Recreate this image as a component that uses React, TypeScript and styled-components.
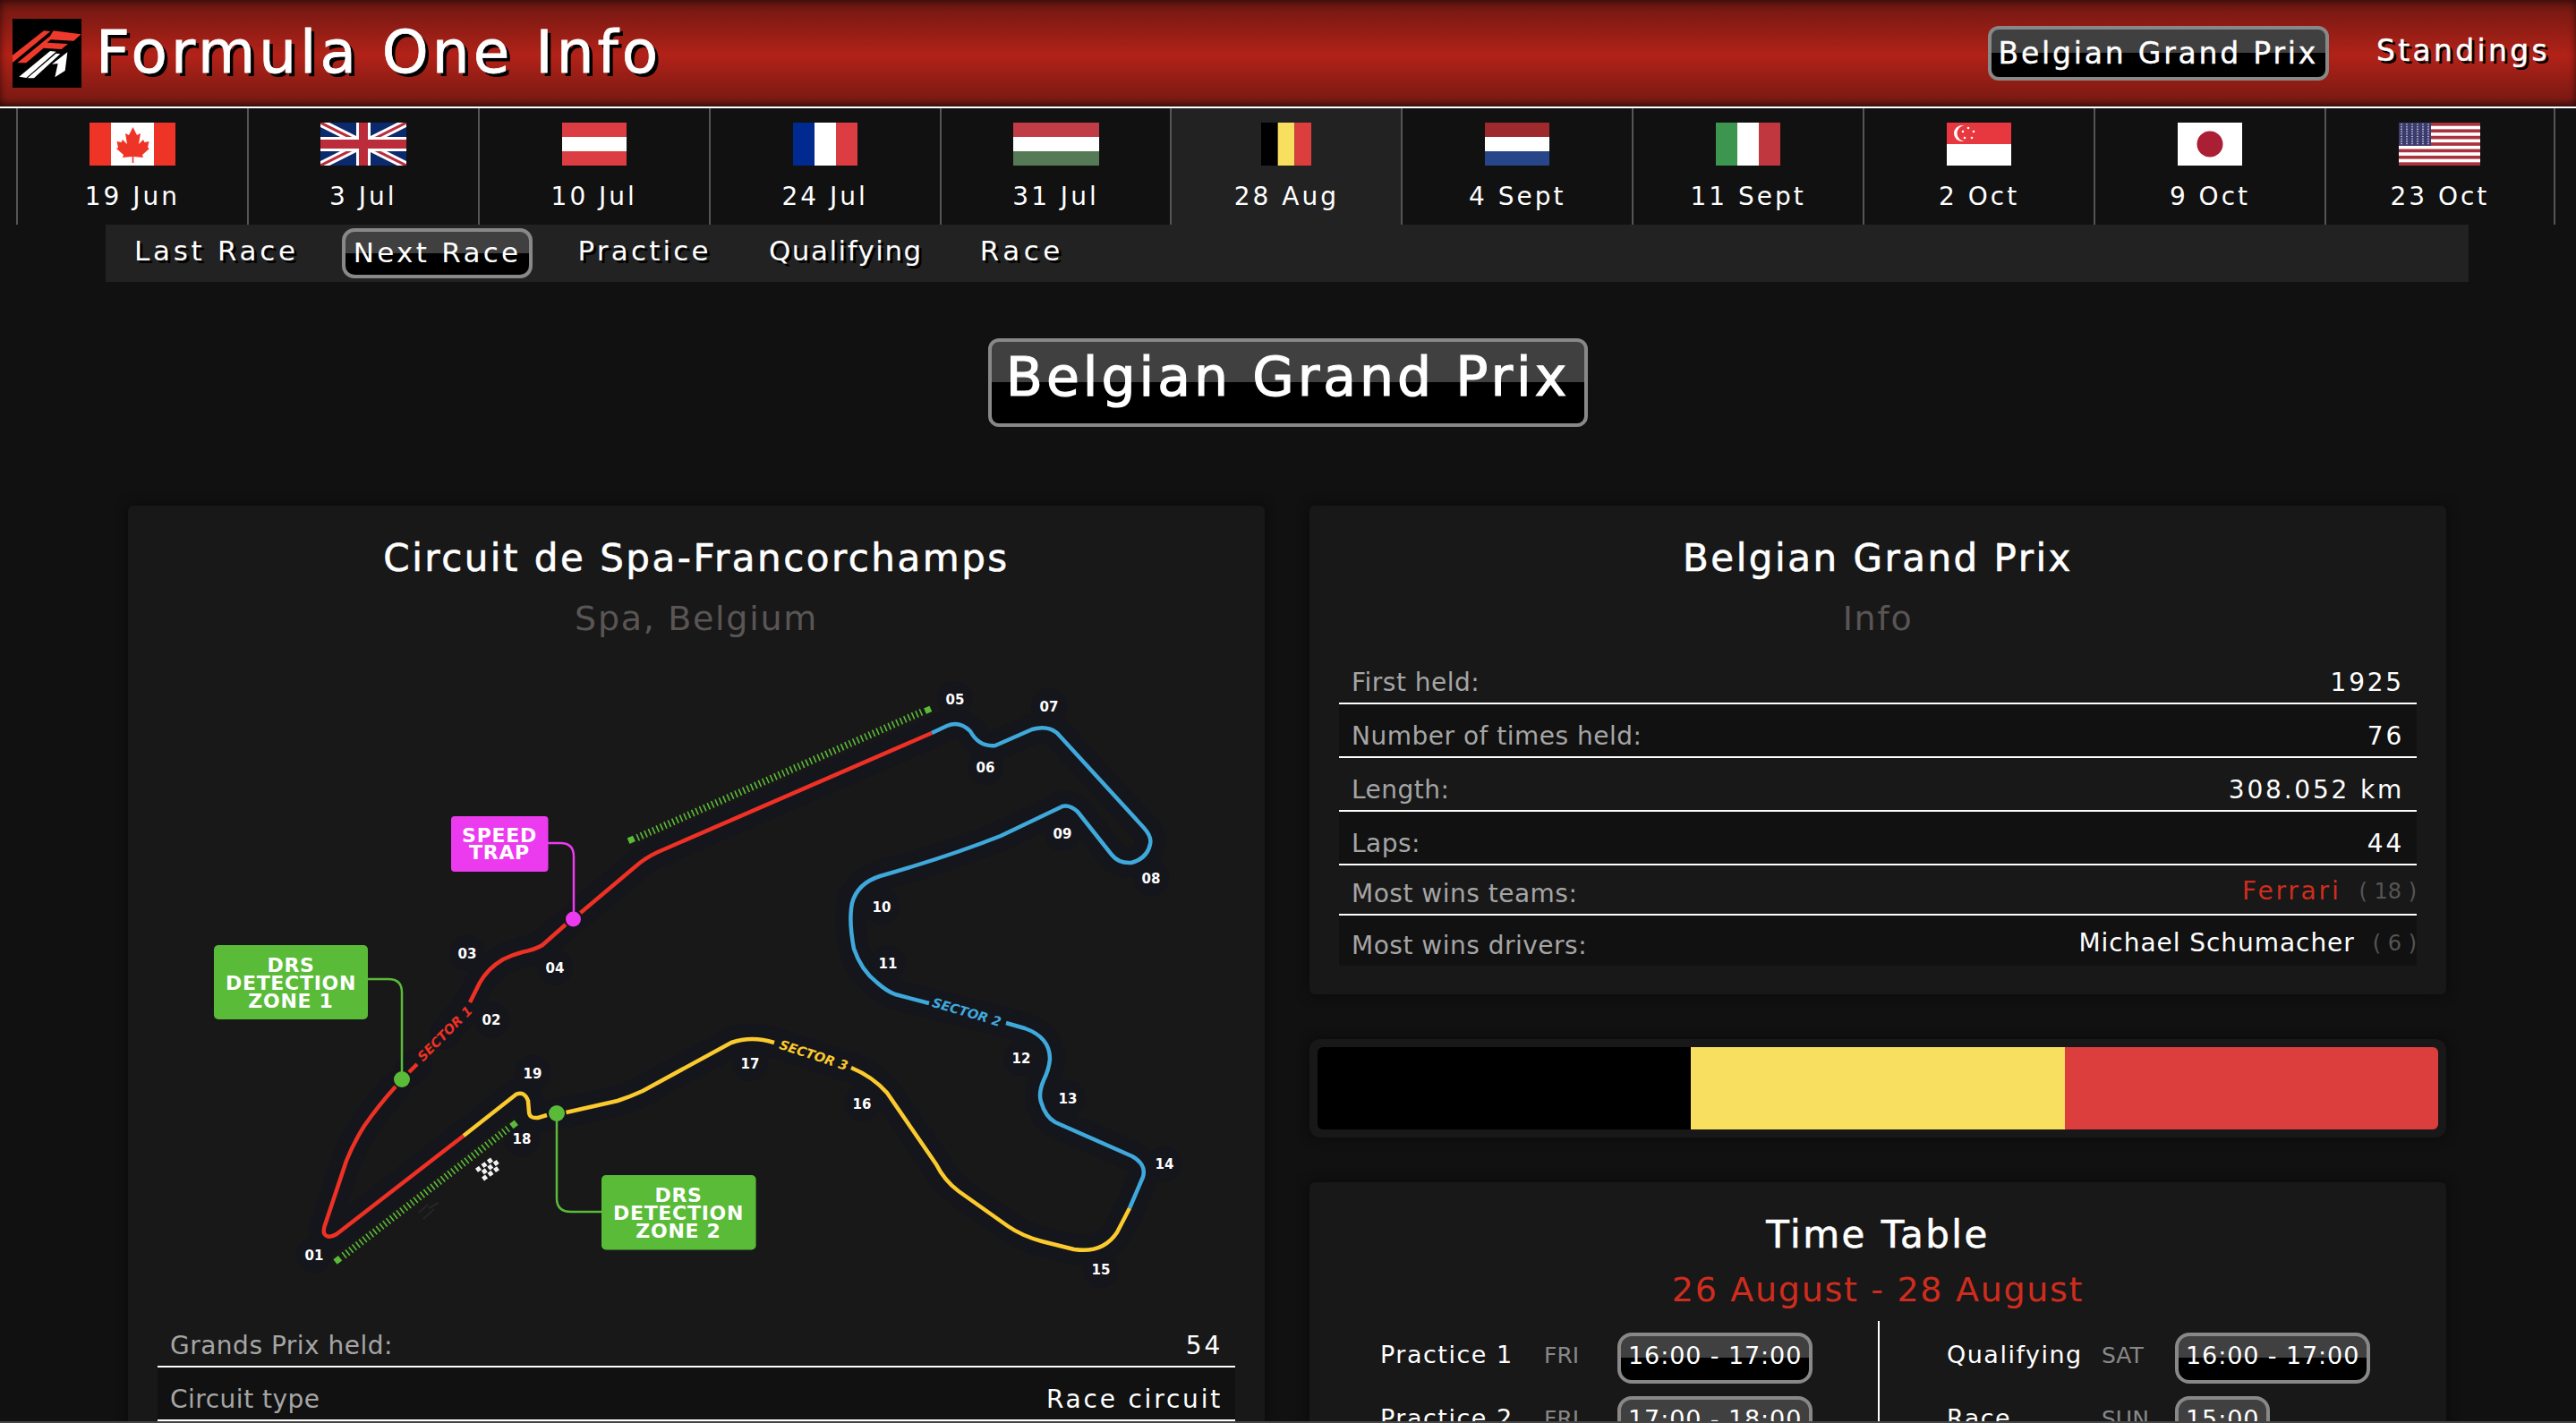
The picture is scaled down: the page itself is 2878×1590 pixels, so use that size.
import React from 'react';
import styled, { createGlobalStyle } from 'styled-components';

const GlobalStyle = createGlobalStyle`
  html, body {
    margin: 0;
    height: 100%;
    overflow: hidden;
    background: #111;
    color: #fff;
    font-family: "DejaVu Sans", "Liberation Sans", sans-serif;
  }
`;

const RED = '#d02c1e';

const Stripes = ({ w, colors, vertical }: { w: number; colors: string[]; vertical?: boolean }) => (
  <svg width={w} height={48} viewBox={`0 0 ${w} 48`}>
    {colors.map((c, i) => vertical
      ? <rect key={i} x={(w / colors.length) * i} y={0} width={w / colors.length} height={48} fill={c} />
      : <rect key={i} x={0} y={16 * i} width={w} height={16} fill={c} />)}
  </svg>
);

const CanadaFlag = () => (
  <svg width={96} height={48} viewBox="0 0 96 48">
    <rect width="96" height="48" fill="#fff" />
    <rect width="24" height="48" fill="#ee3427" />
    <rect x="72" width="24" height="48" fill="#ee3427" />
    <path fill="#ee3427" d="M48.5 5 L44 14 L40 12 L42 24 L37 19 L35.5 22 L30.5 21 L32 28 L30 29 L38 36 L37 39 L47.7 38 L47.7 45 L49.3 45 L49.3 38 L60 39 L59 36 L67 29 L65 28 L66.5 21 L61.5 22 L60 19 L55 24 L57 12 L53 14 Z" />
  </svg>
);

const UkFlag = () => (
  <svg width={96} height={48} viewBox="0 0 96 48">
    <rect width="96" height="48" fill="#0b2a6e" />
    <path d="M0 0 L96 48 M96 0 L0 48" stroke="#fff" strokeWidth="9" />
    <path d="M0 0 L96 48 M96 0 L0 48" stroke="#bb2d3b" strokeWidth="3" />
    <path d="M48 0 V48 M0 24 H96" stroke="#fff" strokeWidth="16" />
    <path d="M48 0 V48 M0 24 H96" stroke="#bb2d3b" strokeWidth="10" />
  </svg>
);

const SingaporeFlag = () => (
  <svg width={72} height={48} viewBox="0 0 72 48">
    <rect width="72" height="48" fill="#fff" />
    <rect width="72" height="24" fill="#e8383f" />
    <circle cx="17" cy="12" r="9" fill="#fff" />
    <circle cx="20.5" cy="12" r="9" fill="#e8383f" />
    {[[24, 6], [30, 10], [28, 17], [20, 17], [18, 10]].map(([x, y]) => (
      <circle key={x * y} cx={x} cy={y} r="1.3" fill="#fff" />
    ))}
  </svg>
);

const JapanFlag = () => (
  <svg width={72} height={48} viewBox="0 0 72 48">
    <rect width="72" height="48" fill="#fff" />
    <circle cx="36" cy="24" r="14.5" fill="#ab1f35" />
  </svg>
);

const UsaFlag = () => (
  <svg width={91} height={48} viewBox="0 0 91 48">
    <rect width="91" height="48" fill="#fff" />
    {Array.from({ length: 7 }).map((_, i) => (
      <rect key={i} y={(48 / 13) * i * 2} width="91" height={48 / 13} fill="#a8323e" />
    ))}
    <rect width="36" height="25.8" fill="#3c3b6e" />
    {Array.from({ length: 9 }).map((_, r) => Array.from({ length: 6 }).map((__, c) => (
      <circle key={`${r}-${c}`} cx={3 + c * 6} cy={2 + r * 2.7} r="0.8" fill="#dfe0ee" />
    )))}
  </svg>
);

const races = [
  { date: '19 Jun', flag: <CanadaFlag /> },
  { date: '3 Jul', flag: <UkFlag /> },
  { date: '10 Jul', flag: <Stripes w={72} colors={['#dc3d43', '#fff', '#dc3d43']} /> },
  { date: '24 Jul', flag: <Stripes w={72} vertical colors={['#002a8f', '#fff', '#dc3d43']} /> },
  { date: '31 Jul', flag: <Stripes w={96} colors={['#c03c47', '#fff', '#557a55']} /> },
  { date: '28 Aug', flag: <Stripes w={56} vertical colors={['#000', '#f9df5f', '#dc3d3d']} />, active: true },
  { date: '4 Sept', flag: <Stripes w={72} colors={['#9e2a2e', '#fff', '#27468a']} /> },
  { date: '11 Sept', flag: <Stripes w={72} vertical colors={['#3d9650', '#fff', '#c0373f']} /> },
  { date: '2 Oct', flag: <SingaporeFlag /> },
  { date: '9 Oct', flag: <JapanFlag /> },
  { date: '23 Oct', flag: <UsaFlag /> },
];

const turns: [string, number, number][] = [
  ['01', 351, 1403], ['02', 549, 1140], ['03', 522, 1066], ['04', 620, 1082], ['05', 1067, 782],
  ['06', 1101, 858], ['07', 1172, 790], ['08', 1286, 982], ['09', 1187, 932], ['10', 985, 1014],
  ['11', 992, 1077], ['12', 1141, 1183], ['13', 1193, 1228.5], ['14', 1301, 1301.5], ['15', 1230, 1419.5],
  ['16', 963, 1234], ['17', 838, 1189], ['18', 583, 1273.5], ['19', 595, 1200],
];

const redTrack = [
  'M518 1270 L376 1380 Q366 1386 362 1379 Q361 1374 364 1367 L387 1298 Q395 1278 407 1259 Q423 1236 442 1215',
  'M457 1199 L466 1190',
  'M525 1121 L536 1099 Q545 1083 562 1073 Q572 1068 583 1065 Q598 1062 606 1057 L632 1034',
  'M648.5 1021 L709 970 Q720 960 735 953 L1041 820',
];
const blueTrack = [
  'M1041 820 L1058 812 Q1072 806 1084 818 Q1094 836 1112 834 L1153 816 Q1170 811 1181 820 L1278 926 Q1287 936 1285 944 Q1282 960 1264 965 Q1250 966 1242 956 L1204 908 Q1195 900 1187 902 L1118 935 Q1060 958 983 980 Q958 988 952 1010 Q948 1030 954 1061 Q962 1085 980 1099 Q990 1108 1000 1112 L1038 1122',
  'M1124 1144 L1145 1150 Q1173 1160 1173 1184 Q1172 1196 1166 1208 Q1160 1222 1163 1232 Q1168 1249 1179 1255 L1265 1293 Q1281 1302 1277 1316 L1262 1351',
];
const yellowTrack = [
  'M1262 1351 L1248 1378 Q1232 1402 1200 1397 L1164 1388 Q1142 1382 1126 1371 L1071 1332 Q1055 1320 1046 1302 L991 1222 Q975 1204 951 1194',
  'M865 1166 Q840 1158 817 1166 L718 1220 Q705 1226 690 1231 L632.5 1244',
  'M611 1247 L601 1250 Q591 1251 591 1243 L590 1231 Q586 1220 577 1223.5 L518 1270',
];

const Logo = () => (
  <svg width={77} height={77} viewBox="0 0 231 231">
    <rect width="231" height="231" fill="#000" />
    <g fill="#ee3a2c">
      <polygon points="0,122 105,40 127,42 0,147" />
      <polygon points="16,148 126,58 137,40 230,52 205,74 128,70 116,80 186,84 164,102 104,98 46,148" />
    </g>
    <g fill="#fff">
      <polygon points="22,194 126,108 146,110 46,198" />
      <polygon points="50,199 146,116 160,118 72,199" />
      <polygon points="142,196 152,150 132,152 184,112 176,174" />
    </g>
  </svg>
);

const CircuitMap = () => (
  <MapSvg viewBox="176 720 1205 749">
    <g fill="none" stroke="#15151c" strokeWidth="34" strokeLinecap="round" strokeLinejoin="round">
      {[...redTrack, ...blueTrack, ...yellowTrack].map(d => <path key={d} d={d} />)}
      <path d="M497 1156 L525 1121 M1038 1122 L1124 1144 M951 1194 L865 1166 M632 1244 L611 1247" />
    </g>
    <g fill="#15151c">
      {turns.map(([t, x, y]) => <circle key={t} cx={x} cy={y} r="20" />)}
    </g>
    <g fill="none" strokeLinecap="butt" strokeLinejoin="round" strokeWidth="4.5">
      <g stroke="#ee3124">{redTrack.map(d => <path key={d} d={d} />)}</g>
      <g stroke="#3fa9dc">{blueTrack.map(d => <path key={d} d={d} />)}</g>
      <g stroke="#fbcb2e">{yellowTrack.map(d => <path key={d} d={d} />)}</g>
    </g>
    <g fill="none" stroke="#5abb38" strokeWidth="8" strokeDasharray="1.6 3.2">
      <path d="M712 937 L1031 796" />
      <path d="M384 1404 L569 1261" />
    </g>
    <g fill="#5abb38">
      <rect x="702" y="936" width="7" height="7" transform="rotate(-24 705 940)" />
      <rect x="1033" y="791" width="7" height="7" transform="rotate(-24 1036 794)" />
      <rect x="374" y="1405" width="7" height="7" transform="rotate(-38 378 1409)" />
      <rect x="571" y="1254" width="7" height="7" transform="rotate(-38 574 1258)" />
    </g>
    <g fill="none" stroke="#5abb38" strokeWidth="2.5">
      <path d="M411 1095 H434 Q449 1095 449 1110 V1207" />
      <path d="M622 1245 V1340 Q622 1355 638 1355 H672" />
    </g>
    <path fill="none" stroke="#ec3aef" strokeWidth="2.5" d="M612 943 H626 Q641 943 641 958 V1028" />
    <ellipse cx="449" cy="1207" rx="9" ry="9" fill="#5abb38" />
    <ellipse cx="622" cy="1245" rx="9" ry="9" fill="#5abb38" />
    <ellipse cx="640.5" cy="1028" rx="8.5" ry="8.5" fill="#ec3aef" />
    <rect x={504} y={913} width={108.5} height={62} rx={4} fill="#ec3aef" />
    <rect x={239} y={1057} width={172} height={83} rx={5} fill="#5abb38" />
    <rect x={672} y={1314} width={172.6} height={83.5} rx={5} fill="#5abb38" />
    <BoxLabel x={558} y={942}>SPEED</BoxLabel>
    <BoxLabel x={558} y={961}>TRAP</BoxLabel>
    <BoxLabel x={325} y={1087}>DRS</BoxLabel>
    <BoxLabel x={325} y={1107}>DETECTION</BoxLabel>
    <BoxLabel x={325} y={1127}>ZONE 1</BoxLabel>
    <BoxLabel x={758} y={1344}>DRS</BoxLabel>
    <BoxLabel x={758} y={1364}>DETECTION</BoxLabel>
    <BoxLabel x={758} y={1384}>ZONE 2</BoxLabel>
    {turns.map(([t, x, y]) => <TurnLabel key={t} x={x} y={y + 5.5}>{t}</TurnLabel>)}
    <SectorLabel transform="rotate(-45 497 1156)" x={497} y={1161} fill="#ee3124">SECTOR 1</SectorLabel>
    <SectorLabel transform="rotate(16.5 1080 1132)" x={1080} y={1137} fill="#3fa9dc">SECTOR 2</SectorLabel>
    <SectorLabel transform="rotate(18 909 1180)" x={909} y={1185} fill="#fbcb2e">SECTOR 3</SectorLabel>
    <g fill="#f2f2f2" transform="rotate(-36 546 1307)">
      {[[0, 0], [8, 0], [16, 0], [4, 6], [12, 6], [20, 6], [0, 12], [8, 12], [16, 12]].map(([x, y]) => (
        <rect key={`${x}-${y}`} x={534 + x} y={1298 + y} width="5" height="5" />
      ))}
    </g>
    <path fill="none" stroke="#2a2a2c" strokeWidth="1.5" d="M468 1356 L478 1347 M473 1363 L485 1352 M479 1351 L490 1345" />
  </MapSvg>
);

const InfoRow = ({ label, value, compact, extra, red, wide }: { label: string; value: string; compact?: boolean; extra?: string; red?: boolean; wide?: boolean }) => (
  <Row $compact={compact}>
    <RowLabel>{label}</RowLabel>
    <RowValue $raised={compact} $red={red} $wide={wide}>{value}</RowValue>
    {extra && <RowCount>{extra}</RowCount>}
  </Row>
);

const App = () => {
  return <Page>
    <GlobalStyle />
    <Header>
      <Logo />
      <SiteTitle>Formula One Info</SiteTitle>
      <HeaderNav>
        <GlossPill $size="header">Belgian Grand Prix</GlossPill>
        <HeaderLink>Standings</HeaderLink>
      </HeaderNav>
    </Header>
    <RaceStrip>
      {races.map(race => (
        <RaceCell key={race.date} $active={race.active}>
          <FlagSlot>{race.flag}</FlagSlot>
          <RaceDate>{race.date}</RaceDate>
        </RaceCell>
      ))}
    </RaceStrip>
    <SubNav>
      <SubNavItem $tracking={3.7}>Last Race</SubNavItem>
      <GlossPill $size="nav">Next Race</GlossPill>
      <SubNavItem $tracking={3.2}>Practice</SubNavItem>
      <SubNavItem $tracking={1.5}>Qualifying</SubNavItem>
      <SubNavItem $tracking={4.5}>Race</SubNavItem>
    </SubNav>
    <TitleWrap>
      <GlossPill $size="title">Belgian Grand Prix</GlossPill>
    </TitleWrap>
    <Columns>
      <Column>
        <Panel>
          <PanelTitle>Circuit de Spa-Francorchamps</PanelTitle>
          <PanelSubtitle>Spa, Belgium</PanelSubtitle>
          <CircuitMap />
          <InfoRow label="Grands Prix held:" value="54" wide />
          <InfoRow label="Circuit type" value="Race circuit" wide />
        </Panel>
      </Column>
      <Column>
        <InfoPanel>
          <PanelTitle>Belgian Grand Prix</PanelTitle>
          <PanelSubtitle>Info</PanelSubtitle>
          <InfoRow label="First held:" value="1925" wide />
          <InfoRow label="Number of times held:" value="76" wide />
          <InfoRow label="Length:" value="308.052 km" wide />
          <InfoRow label="Laps:" value="44" wide />
          <InfoRow label="Most wins teams:" value="Ferrari" extra="( 18 )" red compact wide />
          <InfoRow label="Most wins drivers:" value="Michael Schumacher" extra="( 6 )" compact />
        </InfoPanel>
        <RibbonPanel>
          <Ribbon $color="#000" />
          <Ribbon $color="#f9df5f" />
          <Ribbon $color="#dc3d3d" />
        </RibbonPanel>
        <Panel>
          <PanelTitle>Time Table</PanelTitle>
          <DateRange>26 August - 28 August</DateRange>
          <Schedule>
            <ScheduleSide $inset={46} $labelWidth={183}>
              <Session>
                <SessionName>Practice 1</SessionName>
                <SessionDay>FRI</SessionDay>
                <GlossPill $size="time">16:00 - 17:00</GlossPill>
              </Session>
              <Session>
                <SessionName>Practice 2</SessionName>
                <SessionDay>FRI</SessionDay>
                <GlossPill $size="time">17:00 - 18:00</GlossPill>
              </Session>
            </ScheduleSide>
            <ScheduleSide $inset={75} $labelWidth={173} $divided>
              <Session>
                <SessionName>Qualifying</SessionName>
                <SessionDay>SAT</SessionDay>
                <GlossPill $size="time">16:00 - 17:00</GlossPill>
              </Session>
              <Session>
                <SessionName>Race</SessionName>
                <SessionDay>SUN</SessionDay>
                <GlossPill $size="time">15:00</GlossPill>
              </Session>
            </ScheduleSide>
          </Schedule>
        </Panel>
      </Column>
    </Columns>
    <WindowEdge />
  </Page>;
};

const Page = styled.div`
  height: 1590px;
  overflow: hidden;
  background: #111;
`;

const Header = styled.header`
  height: 119px;
  box-sizing: content-box;
  display: flex;
  align-items: center;
  padding: 0 32px 0 14px;
  border-bottom: 2px solid #fff;
  background: linear-gradient(#5c1510 0, #7d1a13 12%, #b22218 52%, #7d1a13 92%, #561410 100%);
  box-shadow: inset 0 0 8px rgba(0, 0, 0, 0.6);
  > svg {
    flex: none;
  }
`;

const SiteTitle = styled.h1`
  margin: -2px 0 0 16px;
  font-size: 66px;
  font-weight: 400;
  line-height: 1;
  letter-spacing: 4px;
  -webkit-text-stroke: 0.8px #fff;
  text-shadow: 4px 4px 0 #000;
  white-space: nowrap;
`;

const HeaderNav = styled.nav`
  margin-left: auto;
  display: flex;
  align-items: center;
  gap: 53px;
`;

const HeaderLink = styled.a`
  font-size: 33px;
  line-height: 1;
  padding-bottom: 6px;
  letter-spacing: 3.3px;
  margin-right: -3px;
  -webkit-text-stroke: 0.4px #fff;
  text-shadow: 3px 3px 0 #000;
`;

const pillSizes = {
  header: 'height: 61px; padding: 0 8px; font-size: 33px; letter-spacing: 2.8px; border-radius: 12px; -webkit-text-stroke: 0.4px #fff;',
  nav: 'height: 56px; padding: 0 9px 2px; margin: 0 18px 0 16px; font-size: 31px; letter-spacing: 3.3px; border-radius: 14px;',
  title: 'height: 99px; padding: 0 16px 14px; font-size: 60px; letter-spacing: 4px; border-radius: 12px; -webkit-text-stroke: 1.2px #fff;',
  time: 'height: 57px; padding: 0 8px 6px; font-size: 27px; letter-spacing: 0.9px; border-radius: 16px;',
};

const GlossPill = styled.span<{ $size: keyof typeof pillSizes }>`
  display: inline-flex;
  align-items: center;
  justify-content: center;
  justify-self: start;
  box-sizing: border-box;
  border: 4px solid #888;
  background: linear-gradient(#404040 50%, #000 50%);
  color: #fff;
  white-space: nowrap;
  line-height: 1;
  ${({ $size }) => pillSizes[$size]}
`;

const RaceStrip = styled.div`
  display: grid;
  grid-template-columns: repeat(11, 257.9px);
  height: 130px;
  padding-left: 18px;
`;

const RaceCell = styled.div<{ $active?: boolean }>`
  box-sizing: border-box;
  border-left: 2px solid #555;
  &:last-child {
    border-right: 2px solid #555;
  }
  background: ${({ $active }) => ($active ? '#222' : 'transparent')};
  display: flex;
  flex-direction: column;
  align-items: center;
  padding-top: 16px;
`;

const FlagSlot = styled.div`
  height: 48px;
  svg {
    display: block;
  }
`;

const RaceDate = styled.div`
  margin-top: 19px;
  font-size: 28px;
  line-height: 32px;
  letter-spacing: 3px;
  white-space: nowrap;
`;

const SubNav = styled.nav`
  display: flex;
  align-items: center;
  height: 64px;
  margin: 0 120px 0 118px;
  background: #222;
`;

const SubNavItem = styled.a<{ $tracking: number }>`
  padding: 0 32px 6px;
  font-size: 31px;
  line-height: 1;
  letter-spacing: ${({ $tracking }) => $tracking}px;
  text-shadow: 3px 3px 0 #000;
  white-space: nowrap;
`;

const TitleWrap = styled.div`
  display: flex;
  justify-content: center;
  margin: 63px 0 88px;
`;

const Columns = styled.main`
  display: grid;
  grid-template-columns: 1270px 1270px;
  column-gap: 50px;
  padding-left: 143px;
  align-items: start;
`;

const Column = styled.div`
  display: flex;
  flex-direction: column;
  gap: 50px;
`;

const Panel = styled.section`
  padding: 33px 33px 33px;
  background: #181818;
  border-radius: 6px;
  box-shadow: 0 0 14px #0a0a0a;
`;

const InfoPanel = styled(Panel)`
  padding-bottom: 32px;
`;

const PanelTitle = styled.h2`
  margin: 0;
  font-size: 42px;
  line-height: 52px;
  font-weight: 400;
  letter-spacing: 2.5px;
  -webkit-text-stroke: 0.6px #fff;
  text-align: center;
  white-space: nowrap;
`;

const PanelSubtitle = styled.h3`
  margin: 18px 0 13px;
  font-size: 38px;
  line-height: 46px;
  font-weight: 400;
  letter-spacing: 1.7px;
  text-align: center;
  color: #5a5555;
`;

const DateRange = styled(PanelSubtitle)`
  margin: 12px 0 0;
  color: ${RED};
`;

const MapSvg = styled.svg`
  display: block;
  width: 1205px;
  height: 749px;
  margin-top: -8px;
`;

const BoxLabel = styled.text`
  font-family: "DejaVu Sans", sans-serif;
  font-weight: 700;
  font-size: 22px;
  letter-spacing: 0.7px;
  fill: #fff;
  text-anchor: middle;
`;

const TurnLabel = styled.text`
  font-family: "DejaVu Sans", sans-serif;
  font-weight: 700;
  font-size: 15px;
  fill: #fff;
  text-anchor: middle;
`;

const SectorLabel = styled.text`
  font-family: "DejaVu Sans", sans-serif;
  font-weight: 700;
  font-style: italic;
  font-size: 14.5px;
  text-anchor: middle;
`;

const Row = styled.div<{ $compact?: boolean }>`
  box-sizing: border-box;
  height: ${({ $compact }) => ($compact ? '56px' : '60px')};
  display: flex;
  align-items: flex-end;
  padding: 0 14px 6px;
  border-bottom: 2px solid #fff;
  font-size: 28px;
  line-height: 32px;
  white-space: nowrap;
  &:nth-of-type(even) {
    background: #111;
  }
  &:last-child {
    border-bottom: ${({ $compact }) => ($compact ? 'none' : '2px solid #fff')};
  }
`;

const RowLabel = styled.span`
  color: #a5a5a5;
  letter-spacing: 0.5px;
`;

const RowValue = styled.span<{ $raised?: boolean; $red?: boolean; $wide?: boolean }>`
  margin-left: auto;
  letter-spacing: ${({ $wide }) => ($wide ? '2.8px' : '0.95px')};
  color: ${({ $red }) => ($red ? RED : '#fff')};
  position: relative;
  top: ${({ $raised }) => ($raised ? '-3px' : '0')};
`;

const RowCount = styled.span`
  margin: 0 -14px 0 20px;
  color: #555;
  font-size: 24px;
  position: relative;
  top: -3px;
`;

const RibbonPanel = styled.div`
  display: flex;
  padding: 9px;
  height: 110px;
  box-sizing: border-box;
  background: #181818;
  border-radius: 12px;
  box-shadow: 0 0 14px #0a0a0a;
  overflow: hidden;
`;

const Ribbon = styled.div<{ $color: string }>`
  flex: 1;
  background: ${({ $color }) => $color};
  &:first-child {
    border-radius: 6px 0 0 6px;
  }
  &:last-child {
    border-radius: 0 6px 6px 0;
  }
`;

const Schedule = styled.div`
  display: grid;
  grid-template-columns: 602px 602px;
  margin-top: 12px;
`;

const ScheduleSide = styled.div<{ $inset: number; $labelWidth: number; $divided?: boolean }>`
  display: grid;
  grid-template-columns: ${({ $labelWidth }) => $labelWidth}px 82px max-content;
  justify-content: start;
  align-content: start;
  row-gap: 14px;
  padding: 13px 0 0 ${({ $inset }) => $inset}px;
  border-left: ${({ $divided }) => ($divided ? '2px solid #fff' : 'none')};
`;

const Session = styled.div`
  display: contents;
`;

const SessionName = styled.span`
  align-self: center;
  padding-bottom: 8px;
  font-size: 27px;
  letter-spacing: 1.5px;
  white-space: nowrap;
`;

const SessionDay = styled.span`
  align-self: center;
  padding-bottom: 6px;
  font-size: 25px;
  color: #888;
`;

const WindowEdge = styled.div`
  position: fixed;
  left: 0;
  right: 0;
  bottom: 0;
  height: 2px;
  background: #444;
`;

export default App;
